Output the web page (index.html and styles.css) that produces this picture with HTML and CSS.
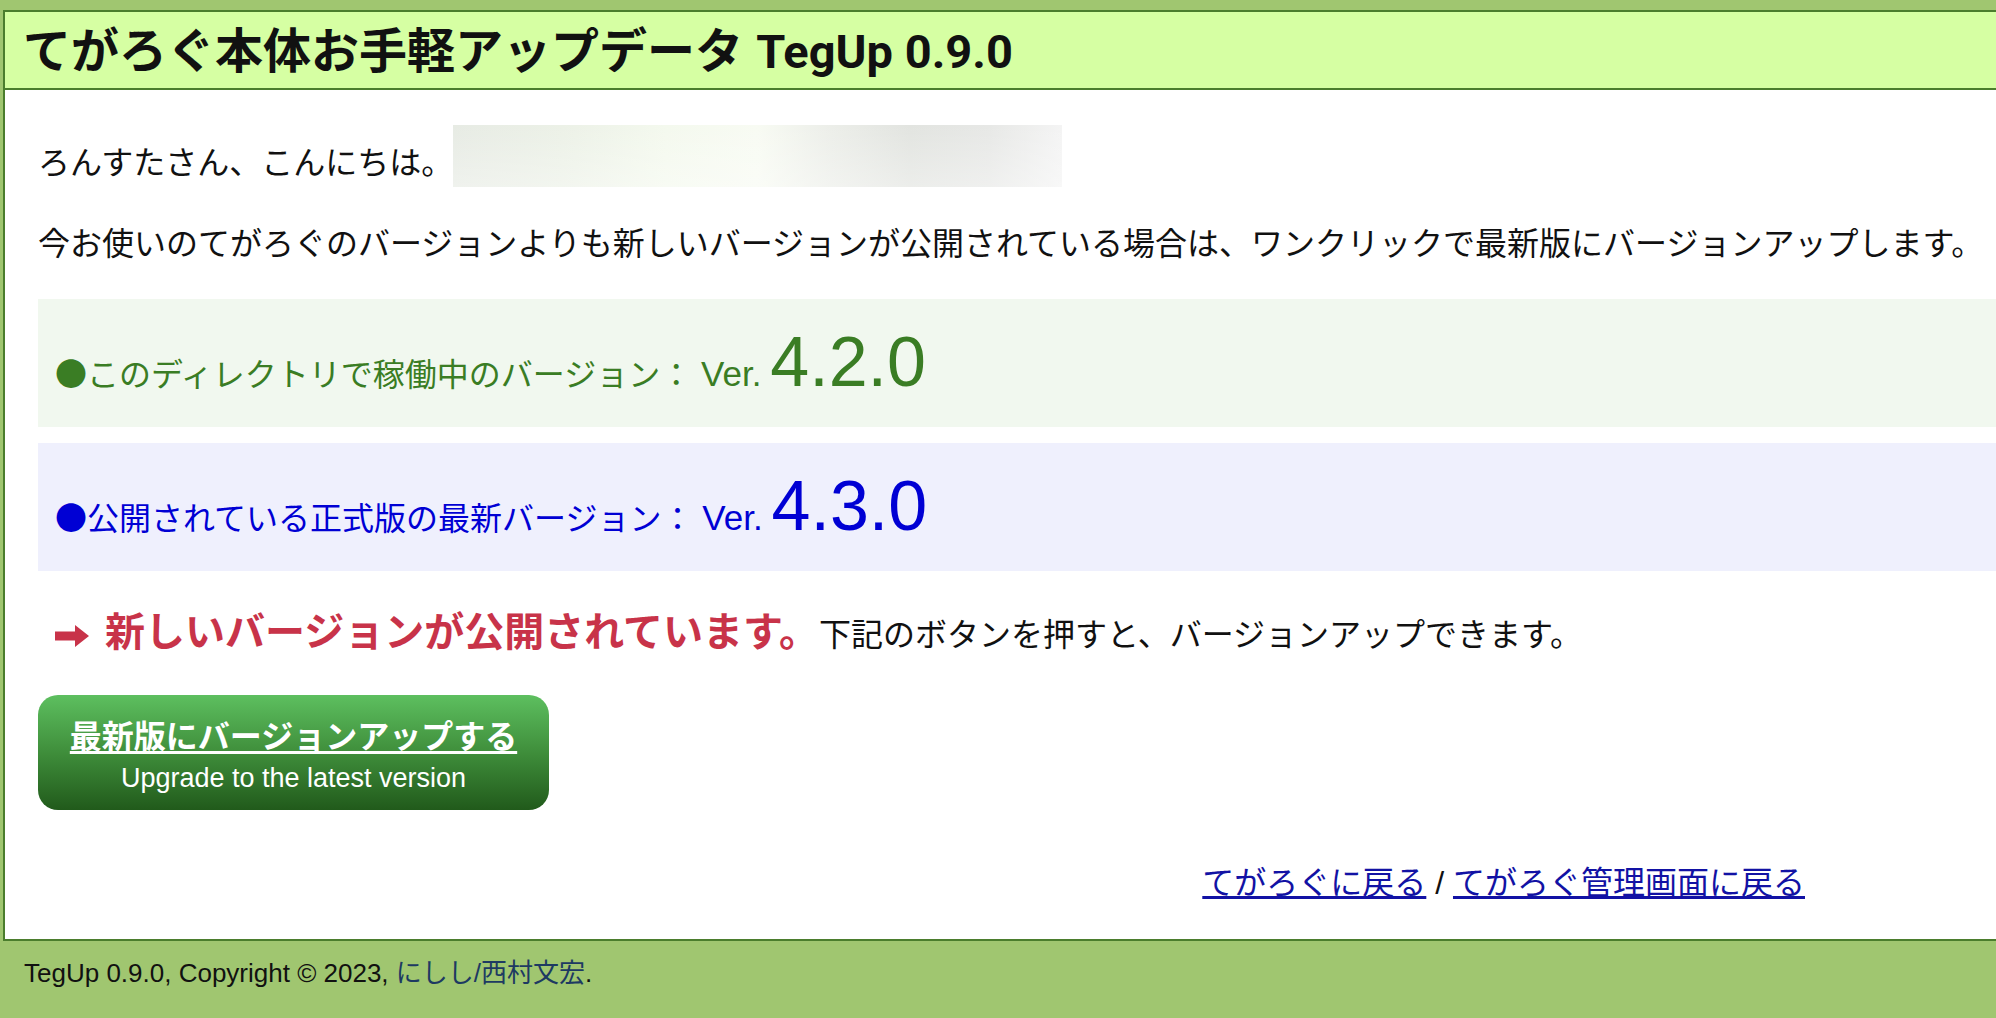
FILE: index.html
```html
<!DOCTYPE html>
<html lang="ja">
<head>
<meta charset="utf-8">
<title>てがろぐ本体お手軽アップデータ TegUp 0.9.0</title>
<link rel="stylesheet" href="styles.css">
</head>
<body>
<div class="page">
  <header class="head">
    <h1 class="title">てがろぐ本体お手軽アップデータ <span class="title-en">TegUp 0.9.0</span></h1>
  </header>
  <main class="content">
    <div class="greet">
      <span class="greet-text">ろんすたさん、こんにちは。</span>
      <span class="masked"></span>
    </div>
    <p class="intro">今お使いのてがろぐのバージョンよりも新しいバージョンが公開されている場合は、ワンクリックで最新版にバージョンアップします。</p>
    <div class="ver ver-current"><span class="dot">●</span>このディレクトリで稼働中のバージョン： <span class="ver-label">Ver.</span> <span class="ver-num">4.2.0</span></div>
    <div class="ver ver-latest"><span class="dot">●</span>公開されている正式版の最新バージョン： <span class="ver-label">Ver.</span> <span class="ver-num">4.3.0</span></div>
    <p class="notice"><svg class="arrow" width="34" height="22" viewBox="0 0 34 22" aria-hidden="true"><path d="M0 6.5H20V0L34 11L20 22V15.5H0Z" fill="#c83349"/></svg><strong class="notice-strong">新しいバージョンが公開されています。</strong>下記のボタンを押すと、バージョンアップできます。</p>
    <a class="upgrade" href="#"><span class="upgrade-ja">最新版にバージョンアップする</span><span class="upgrade-en">Upgrade to the latest version</span></a>
    <p class="links"><a class="link" href="#">てがろぐに戻る</a> / <a class="link" href="#">てがろぐ管理画面に戻る</a></p>
  </main>
  <footer class="foot">TegUp 0.9.0, Copyright © 2023, <a class="author" href="#">にしし/西村文宏</a>.</footer>
</div>
</body>
</html>
```

FILE: styles.css
```css
html, body {
  margin: 0;
  padding: 0;
  overflow: hidden;
}
body {
  background: #a0c670;
  font-family: "Liberation Sans", "Noto Sans CJK JP", sans-serif;
  color: #111;
  font-size: 32px;
}
.page {
  margin: 10px -20px 0 3px;
}
.head {
  background: #d6ffa3;
  border: 2px solid #4b7d2d;
  height: 76px;
  box-sizing: content-box;
}
.title {
  margin: 0;
  padding: 3px 0 0 18px;
  font-size: 48px;
  line-height: 73px;
  font-weight: bold;
  white-space: nowrap;
}
.title-en {
  font-family: Roboto, "Liberation Sans", sans-serif;
  font-size: 47px;
}
.content {
  background: #fff;
  border-left: 2px solid #4b7d2d;
  border-bottom: 2px solid #4b7d2d;
  padding: 35px 0 32px 33px;
}
.greet {
  display: flex;
  align-items: flex-end;
}
.greet-text {
  line-height: 47px;
}
.masked {
  width: 609px;
  height: 62px;
  margin-left: 0;
  background:
    linear-gradient(180deg, rgba(255,255,255,0) 0%, rgba(255,255,255,0.35) 100%),
    linear-gradient(90deg, #e7ebe4 0%, #ecf1e7 18%, #f4f9ee 35%, #f8fbf3 50%, #eceee9 62%, #e2e4e0 75%, #e7e8e6 88%, #f4f4f4 100%);
}
.intro {
  margin: 34px 0 0;
  line-height: 47px;
  white-space: nowrap;
}
.ver {
  height: 128px;
  box-sizing: border-box;
  padding: 28px 17px 0;
  line-height: 1;
  white-space: nowrap;
}
.ver-current {
  margin-top: 31px;
  background: #f1f8ef;
  color: #3a7d24;
}
.ver-latest {
  margin-top: 16px;
  background: #eff0fd;
  color: #0000d4;
}
.dot {
  font-family: "Noto Sans CJK JP", sans-serif;
}
.ver-label {
  font-size: 35px;
}
.ver-num {
  font-size: 70px;
}
.notice {
  margin: 33px 0 0;
  padding-left: 17px;
  line-height: 56px;
  white-space: nowrap;
}
.arrow {
  vertical-align: -1px;
  margin-right: 16px;
}
.notice-strong {
  color: #c83349;
  font-size: 40px;
  font-weight: bold;
}
.upgrade {
  display: flex;
  flex-direction: column;
  align-items: center;
  width: 511px;
  height: 115px;
  box-sizing: border-box;
  margin-top: 32px;
  padding-top: 22px;
  border-radius: 20px;
  background: linear-gradient(180deg, #5dbf5f 0%, #3f8e3b 50%, #215a1b 100%);
  color: #fff;
  text-decoration: none;
}
.upgrade-ja {
  font-weight: bold;
  line-height: 40px;
  text-decoration: underline;
  text-underline-offset: 3px;
}
.upgrade-en {
  margin-top: 4px;
  font-size: 27px;
  line-height: 34px;
}
.links {
  margin: 50px 0 0;
  padding-right: 211px;
  text-align: right;
  line-height: 47px;
  white-space: nowrap;
}
.link {
  color: #1212a4;
  text-decoration: underline;
}
.foot {
  padding: 13px 0 0 21px;
  font-size: 26px;
  line-height: 39px;
  height: 64px;
  white-space: nowrap;
}
.author {
  color: #1d3a62;
  text-decoration: none;
}
```
